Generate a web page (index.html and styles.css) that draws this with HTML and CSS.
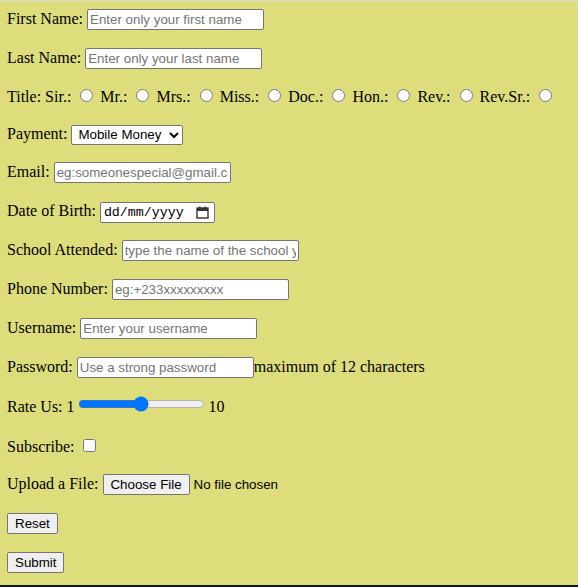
FILE: index.html
```html
<!DOCTYPE html>
<html lang="en">
<head>
<meta charset="utf-8">
<title>Registration Form</title>
<link rel="stylesheet" href="styles.css">
</head>
<body>
<div class="page">
  <form class="form">
    <div class="row">First Name: <input class="text" type="text" placeholder="Enter only your first name"></div>
    <div class="row">Last Name: <input class="text" type="text" placeholder="Enter only your last name"></div>
    <div class="row row-title">Title: Sir.: <input type="radio" name="t"> Mr.: <input type="radio" name="t"> Mrs.: <input type="radio" name="t"> Miss.: <input type="radio" name="t"> Doc.: <input type="radio" name="t"> Hon.: <input type="radio" name="t"> Rev.: <input type="radio" name="t"> Rev.Sr.: <input type="radio" name="t"></div>
    <div class="row row-pay">Payment: <select class="sel"><option>Mobile Money</option><option>Bank Transfer</option><option>Cash</option></select></div>
    <div class="row">Email: <input class="text" type="email" placeholder="eg:someonespecial@gmail.com"></div>
    <div class="row">Date of Birth: <span class="date"><span class="date-text">dd/mm/yyyy</span><svg class="cal" width="13" height="13" viewBox="0 0 13 13"><rect x="1" y="2" width="11" height="10" fill="none" stroke="#333" stroke-width="1.4"/><rect x="1" y="2" width="11" height="3" fill="#333"/><rect x="3" y="0.5" width="1.4" height="2.5" fill="#333"/><rect x="8.6" y="0.5" width="1.4" height="2.5" fill="#333"/></svg></span></div>
    <div class="row">School Attended: <input class="text" type="text" placeholder="type the name of the school you attended"></div>
    <div class="row">Phone Number: <input class="text" type="tel" placeholder="eg:+233xxxxxxxxx"></div>
    <div class="row">Username: <input class="text" type="text" placeholder="Enter your username"></div>
    <div class="row">Password: <input class="text" type="password" placeholder="Use a strong password">maximum of 12 characters</div>
    <div class="row">Rate Us: 1<input class="range" type="range" min="1" max="10" step="0.5" value="5.5">10</div>
    <div class="row row-sub">Subscribe: <input type="checkbox"></div>
    <div class="row">Upload a File: <input class="file" type="file"></div>
    <div class="row"><input class="btn" type="reset" value="Reset"></div>
    <div class="row"><input class="btn" type="submit" value="Submit"></div>
  </form>
</div>
</body>
</html>
```

FILE: styles.css
```css
html, body {
  margin: 0;
  padding: 0;
}
body {
  background: #dddd7b;
  font-family: "Liberation Serif", "Times New Roman", serif;
  font-size: 16px;
  color: #000;
}
.page {
  box-sizing: border-box;
  height: 587px;
  border-top: 1px solid #d6d6d6;
  border-bottom: 2px solid #0d1a2c;
  padding: 6px 7px 0 7px;
}
.form {
  display: flex;
  flex-direction: column;
  gap: 16px;
}
.row {
  height: 23px;
  line-height: 23px;
  white-space: nowrap;
}
.row-title {
  height: 21px;
  line-height: 23px;
}
.row-pay {
  height: 22px;
  line-height: 24px;
}
.row-sub {
  height: 21px;
  padding-top: 2px;
}
input, select {
  font-family: "Liberation Sans", Arial, sans-serif;
  font-size: 13.333px;
  vertical-align: baseline;
}
.text {
  box-sizing: border-box;
  width: 177px;
  height: 21px;
  padding: 1px 2px;
  border: 1px solid #767676;
  border-radius: 2px;
  background: #fff;
  color: #000;
  margin: 0;
}
.text::placeholder {
  color: #757575;
}
.sel {
  box-sizing: border-box;
  width: 112px;
  height: 20px;
  border: 1px solid #767676;
  border-radius: 2px;
  background: #fff;
  color: #000;
  padding: 0 0 0 2px;
}
.date {
  display: inline-flex;
  align-items: center;
  justify-content: space-between;
  box-sizing: border-box;
  width: 115px;
  height: 21px;
  border: 1px solid #767676;
  border-radius: 2px;
  background: #fff;
  padding: 0 3px 0 3px;
  vertical-align: baseline;
  line-height: 19px;
}
.date-text {
  font-family: "Liberation Mono", "Courier New", monospace;
  font-size: 13.333px;
  line-height: 19px;
  color: #000;
}
.cal {
  display: block;
  margin-right: 2px;
}
.range {
  width: 127px;
  margin: 2px 4px 0 3px;
  accent-color: #0075ff;
}
.file {
  width: 200px;
}
.file::file-selector-button {
  font-family: "Liberation Sans", Arial, sans-serif;
  font-size: 13.333px;
  box-sizing: border-box;
  width: 87px;
  height: 21px;
  padding: 1px 6px;
  border: 1px solid #767676;
  border-radius: 2px;
  background: #efefef;
  margin-right: 4px;
}
.btn {
  box-sizing: border-box;
  height: 21px;
  padding: 1px 7px;
  border: 1px solid #767676;
  border-radius: 2px;
  background: #efefef;
  color: #000;
  margin: 0;
}
```
